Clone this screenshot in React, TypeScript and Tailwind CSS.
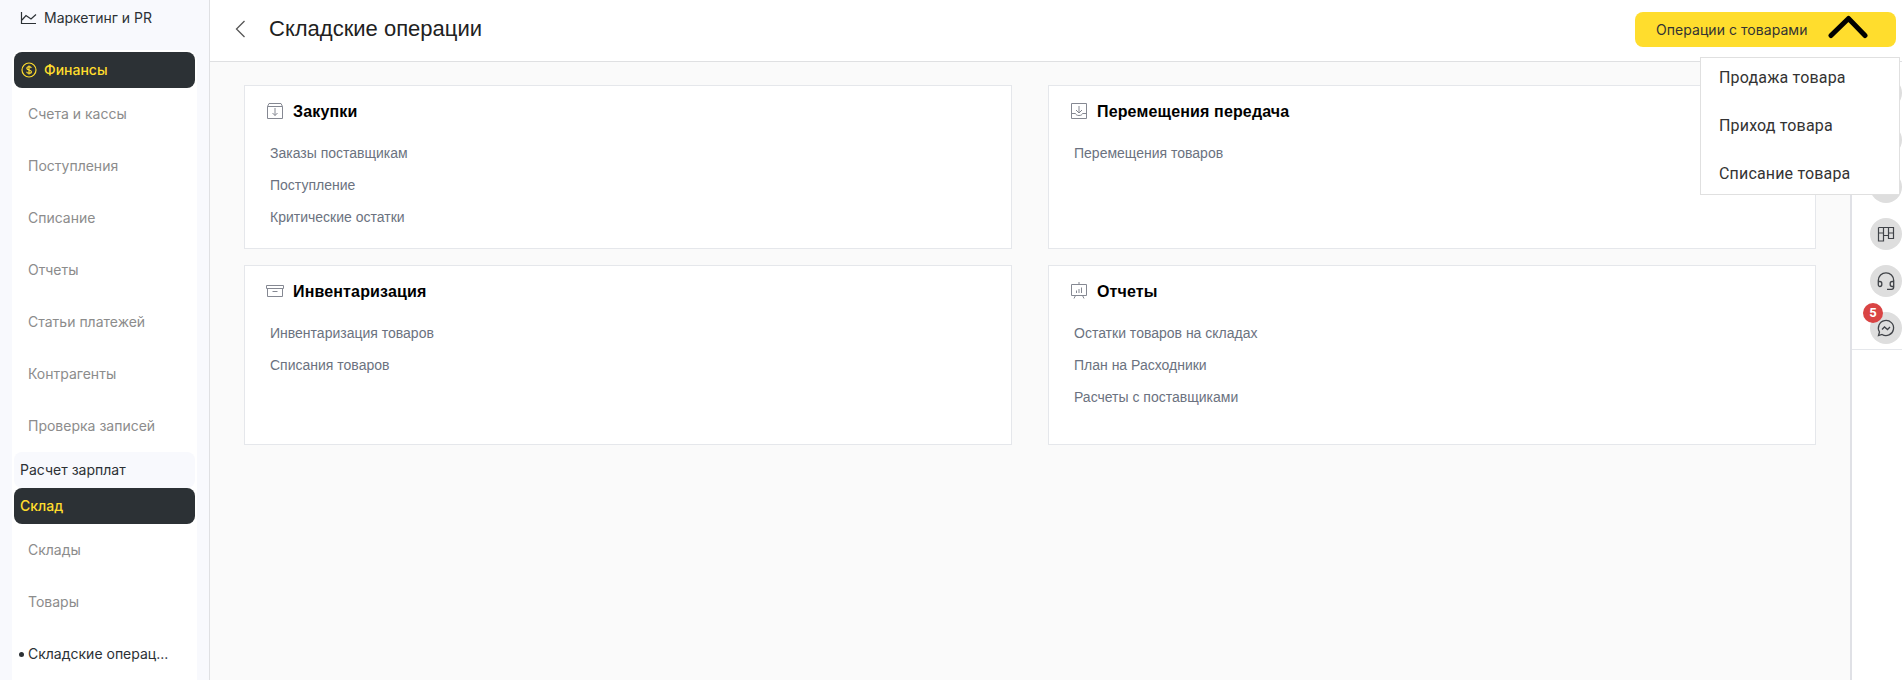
import React from "react";

type IconProps = { children: React.ReactNode };

function Glyph({ children }: IconProps) {
  return (
    <svg viewBox="0 1 18 18" fill="none" stroke="currentColor" className="size-[18px] shrink-0 overflow-visible">
      {children}
    </svg>
  );
}

const BoxDown = () => (
  <Glyph>
    <path d="M1.5 4.5v12h15v-12zM1.5 4.5L3 1.5h12l1.500 3M9 6v7.500M6.500 11L9 13.500l2.500-2.500" />
  </Glyph>
);
const TrayDown = () => (
  <Glyph>
    <path d="M1.500 1.500h15v15h-15zM1.500 11.500h4c.5 1.300 1.500 2 3.500 2s3-.7 3.500-2h4M9 4v6.500M6 8l3 3 3-3" />
  </Glyph>
);
const Archive = () => (
  <Glyph>
    <path d="M.5 3.500h17v3H.5zM1.500 6.500v8h15v-8M6.500 9.500h5" />
  </Glyph>
);
const Board = () => (
  <Glyph>
    <path d="M1.500 2.500h15v11h-15zM9 0v2.500M5.500 13.500L4 16.500M12.500 13.500L14 16.500M6.500 11V8.500M9 11V7M11.500 11V5.500" />
  </Glyph>
);

function Card({ icon, title, links }: { icon: React.ReactNode; title: string; links: string[] }) {
  return (
    <section className="border border-[#e5e7eb] bg-white pl-[21px] pt-[16px]">
      <div className="flex h-5 items-center gap-[9px] text-[#858892]">
        {icon}
        <h2 className="text-base font-bold tracking-[0.15px] text-black">{title}</h2>
      </div>
      <ul className="pl-1 pt-[15px] text-sm text-[#6b7280]">
        {links.map((l) => (
          <li key={l} className="flex h-8 items-center">{l}</li>
        ))}
      </ul>
    </section>
  );
}

function SubItem({ text }: { text: string }) {
  return <li className="flex h-[52px] items-center pl-4 text-[#8c8c8c]">{text}</li>;
}

function Sidebar() {
  return (
    <aside className="h-full w-[210px] shrink-0 overflow-hidden border-r border-[#dfe0e3] bg-[#f8f9fd] font-['Inter',sans-serif] text-sm text-[#2c3135]">
      <div className="flex h-9 items-center gap-[6px] pl-5">
        <svg viewBox="0 0 18 18" fill="none" stroke="currentColor" strokeWidth="1.200" className="size-[18px]">
          <path d="M1.500 3v11.500H16M2 11l4-4.500L11 10l5-4.500" />
        </svg>
        <span>Маркетинг и PR</span>
      </div>
      <nav className="ml-3 mt-[14px] h-[640px] w-[185px] rounded-t-[10px] bg-white px-[2px] pt-[2px]">
        <div className="flex h-9 items-center gap-[6px] rounded-lg bg-[#2c3135] pl-[6px] font-medium text-[#ffdd2d]">
          <svg viewBox="0 0 18 18" fill="none" stroke="currentColor" strokeWidth="1.200" className="size-[18px]">
            <circle cx="9" cy="9" r="7" />
            <path d="M11.300 7c-.2-.8-1-1.300-2.300-1.300-1.300 0-2.200.6-2.200 1.600 0 2.300 4.600 1.100 4.600 3.400 0 1-1 1.600-2.400 1.600s-2.300-.6-2.400-1.500M9 4.500v9" />
          </svg>
          <span>Финансы</span>
        </div>
        <ul className="-ml-[2px]">
          {["Счета и кассы", "Поступления", "Списание", "Отчеты", "Статьи платежей", "Контрагенты", "Проверка записей"].map((t) => (
            <SubItem key={t} text={t} />
          ))}
        </ul>
        <div className="flex h-9 items-center rounded-lg bg-[#f8f9fd] pl-[6px]">Расчет зарплат</div>
        <div className="flex h-9 items-center rounded-lg bg-[#2c3135] pl-[6px] font-medium text-[#ffdd2d]">Склад</div>
        <ul className="-ml-[2px]">
          <SubItem text="Склады" />
          <SubItem text="Товары" />
          <li className="flex h-[52px] items-center gap-[4px] pl-[7px]">
            <span className="mt-px size-[5px] rounded-full bg-[#2c3135]" />
            Складские операц...
          </li>
        </ul>
      </nav>
    </aside>
  );
}

function Round({ children }: { children?: React.ReactNode }) {
  return (
    <div className="relative flex size-8 shrink-0 items-center justify-center rounded-full bg-[#dedede] text-[#404348]">
      {children}
    </div>
  );
}

const railIcon = "size-[18px] overflow-visible";

function Rail() {
  return (
    <div className="w-[52px] shrink-0 border-l-2 border-[#e0e1e6] bg-white">
      <div className="flex h-[288px] flex-col items-end gap-[15px] border-b border-[#e5e7eb] pt-[15px]">
        <Round />
        <Round />
        <Round />
        <Round>
          <svg viewBox="0 0 18 18" fill="none" stroke="currentColor" strokeWidth="1.200" className={railIcon}>
            <path d="M1.500 2.500h15v11h-5V2.500M1.500 2.500v13.500h5V2.500M6.500 10.500h5M1.500 8h5M11.500 8h5" />
          </svg>
        </Round>
        <Round>
          <svg viewBox="0 0 18 18" fill="none" stroke="currentColor" strokeWidth="1.300" className={railIcon}>
            <path d="M1.300 12V8.500a7.700 7.700 0 0 1 15.400 0V15c0 1.500-.7 2.300-2.200 2.300H10M1.300 9.500h1.500c1.300 0 2 .8 2 2v1c0 1.300-.7 2-2 2-1 0-1.500-.8-1.500-2zM16.700 9.500h-1.500c-1.300 0-2 .8-2 2v1c0 1.300.7 2 2 2h1.500" />
          </svg>
        </Round>
        <Round>
          <svg viewBox="0 0 18 18" fill="none" stroke="currentColor" strokeWidth="1.300" className={railIcon}>
            <path d="M1.500 16.500l1-3.500A7.600 7.600 0 1 1 5 15.500zM5 10.500l2.500-2.500 3 2.500L13 8" />
          </svg>
          <span className="absolute -left-[7px] -top-[9px] flex size-5 items-center justify-center rounded-full bg-[#d94444] font-['Roboto',sans-serif] text-[13px] font-bold text-white">5</span>
        </Round>
      </div>
    </div>
  );
}

export default function App() {
  return (
    <div className="flex h-[680px] w-full overflow-hidden bg-[#fafafa] font-['Liberation_Sans',sans-serif]">
      <Sidebar />
      <div className="flex min-w-0 grow flex-col">
        <header className="flex h-[62px] shrink-0 items-start border-b border-[#dfe0e2] bg-white pl-[25px] pr-[6px]">
          <svg viewBox="0 0 10 18" fill="none" stroke="#555" strokeWidth="1.300" className="mt-5 h-[18px] w-[10px]">
            <path d="M9.500 1L1.500 9l8 8" />
          </svg>
          <h1 className="ml-6 mt-[13px] text-[22px] leading-8 text-[#212121]">Складские операции</h1>
          <div className="relative ml-auto mt-3">
            <button className="flex h-[35px] w-[261px] items-center rounded-lg bg-[#ffdd2d] pl-[21px] font-['Inter',sans-serif] text-sm text-[#333]">
              <span className="pt-px tracking-[0.05px]">Операции с товарами</span>
              <svg viewBox="0 0 40 24" fill="none" stroke="#000" strokeWidth="5" strokeLinecap="round" strokeLinejoin="round" className="-mt-1.5 ml-auto mr-[28px] h-6 w-10">
                <path d="M3 20.500L20.500 3.500 37 20.500" />
              </svg>
            </button>
            <ul className="absolute left-[65px] top-[45px] z-10 flex h-[138px] w-[200px] flex-col justify-between border border-[#e0e0e0] bg-white pl-[18px] font-['Roboto',sans-serif] text-base tracking-[0.17px] text-[#333]">
              {["Продажа товара", "Приход товара", "Списание товара"].map((t) => (
                <li key={t} className="flex h-10 items-center">{t}</li>
              ))}
            </ul>
          </div>
        </header>
        <div className="flex min-h-0 grow">
          <main className="grid grow grid-cols-[768px_768px] grid-rows-[164px_180px] gap-x-9 gap-y-4 pl-[34px] pt-[23px]">
            <Card icon={<BoxDown />} title="Закупки" links={["Заказы поставщикам", "Поступление", "Критические остатки"]} />
            <Card icon={<TrayDown />} title="Перемещения передача" links={["Перемещения товаров"]} />
            <Card icon={<Archive />} title="Инвентаризация" links={["Инвентаризация товаров", "Списания товаров"]} />
            <Card icon={<Board />} title="Отчеты" links={["Остатки товаров на складах", "План на Расходники", "Расчеты с поставщиками"]} />
          </main>
          <Rail />
        </div>
      </div>
    </div>
  );
}
